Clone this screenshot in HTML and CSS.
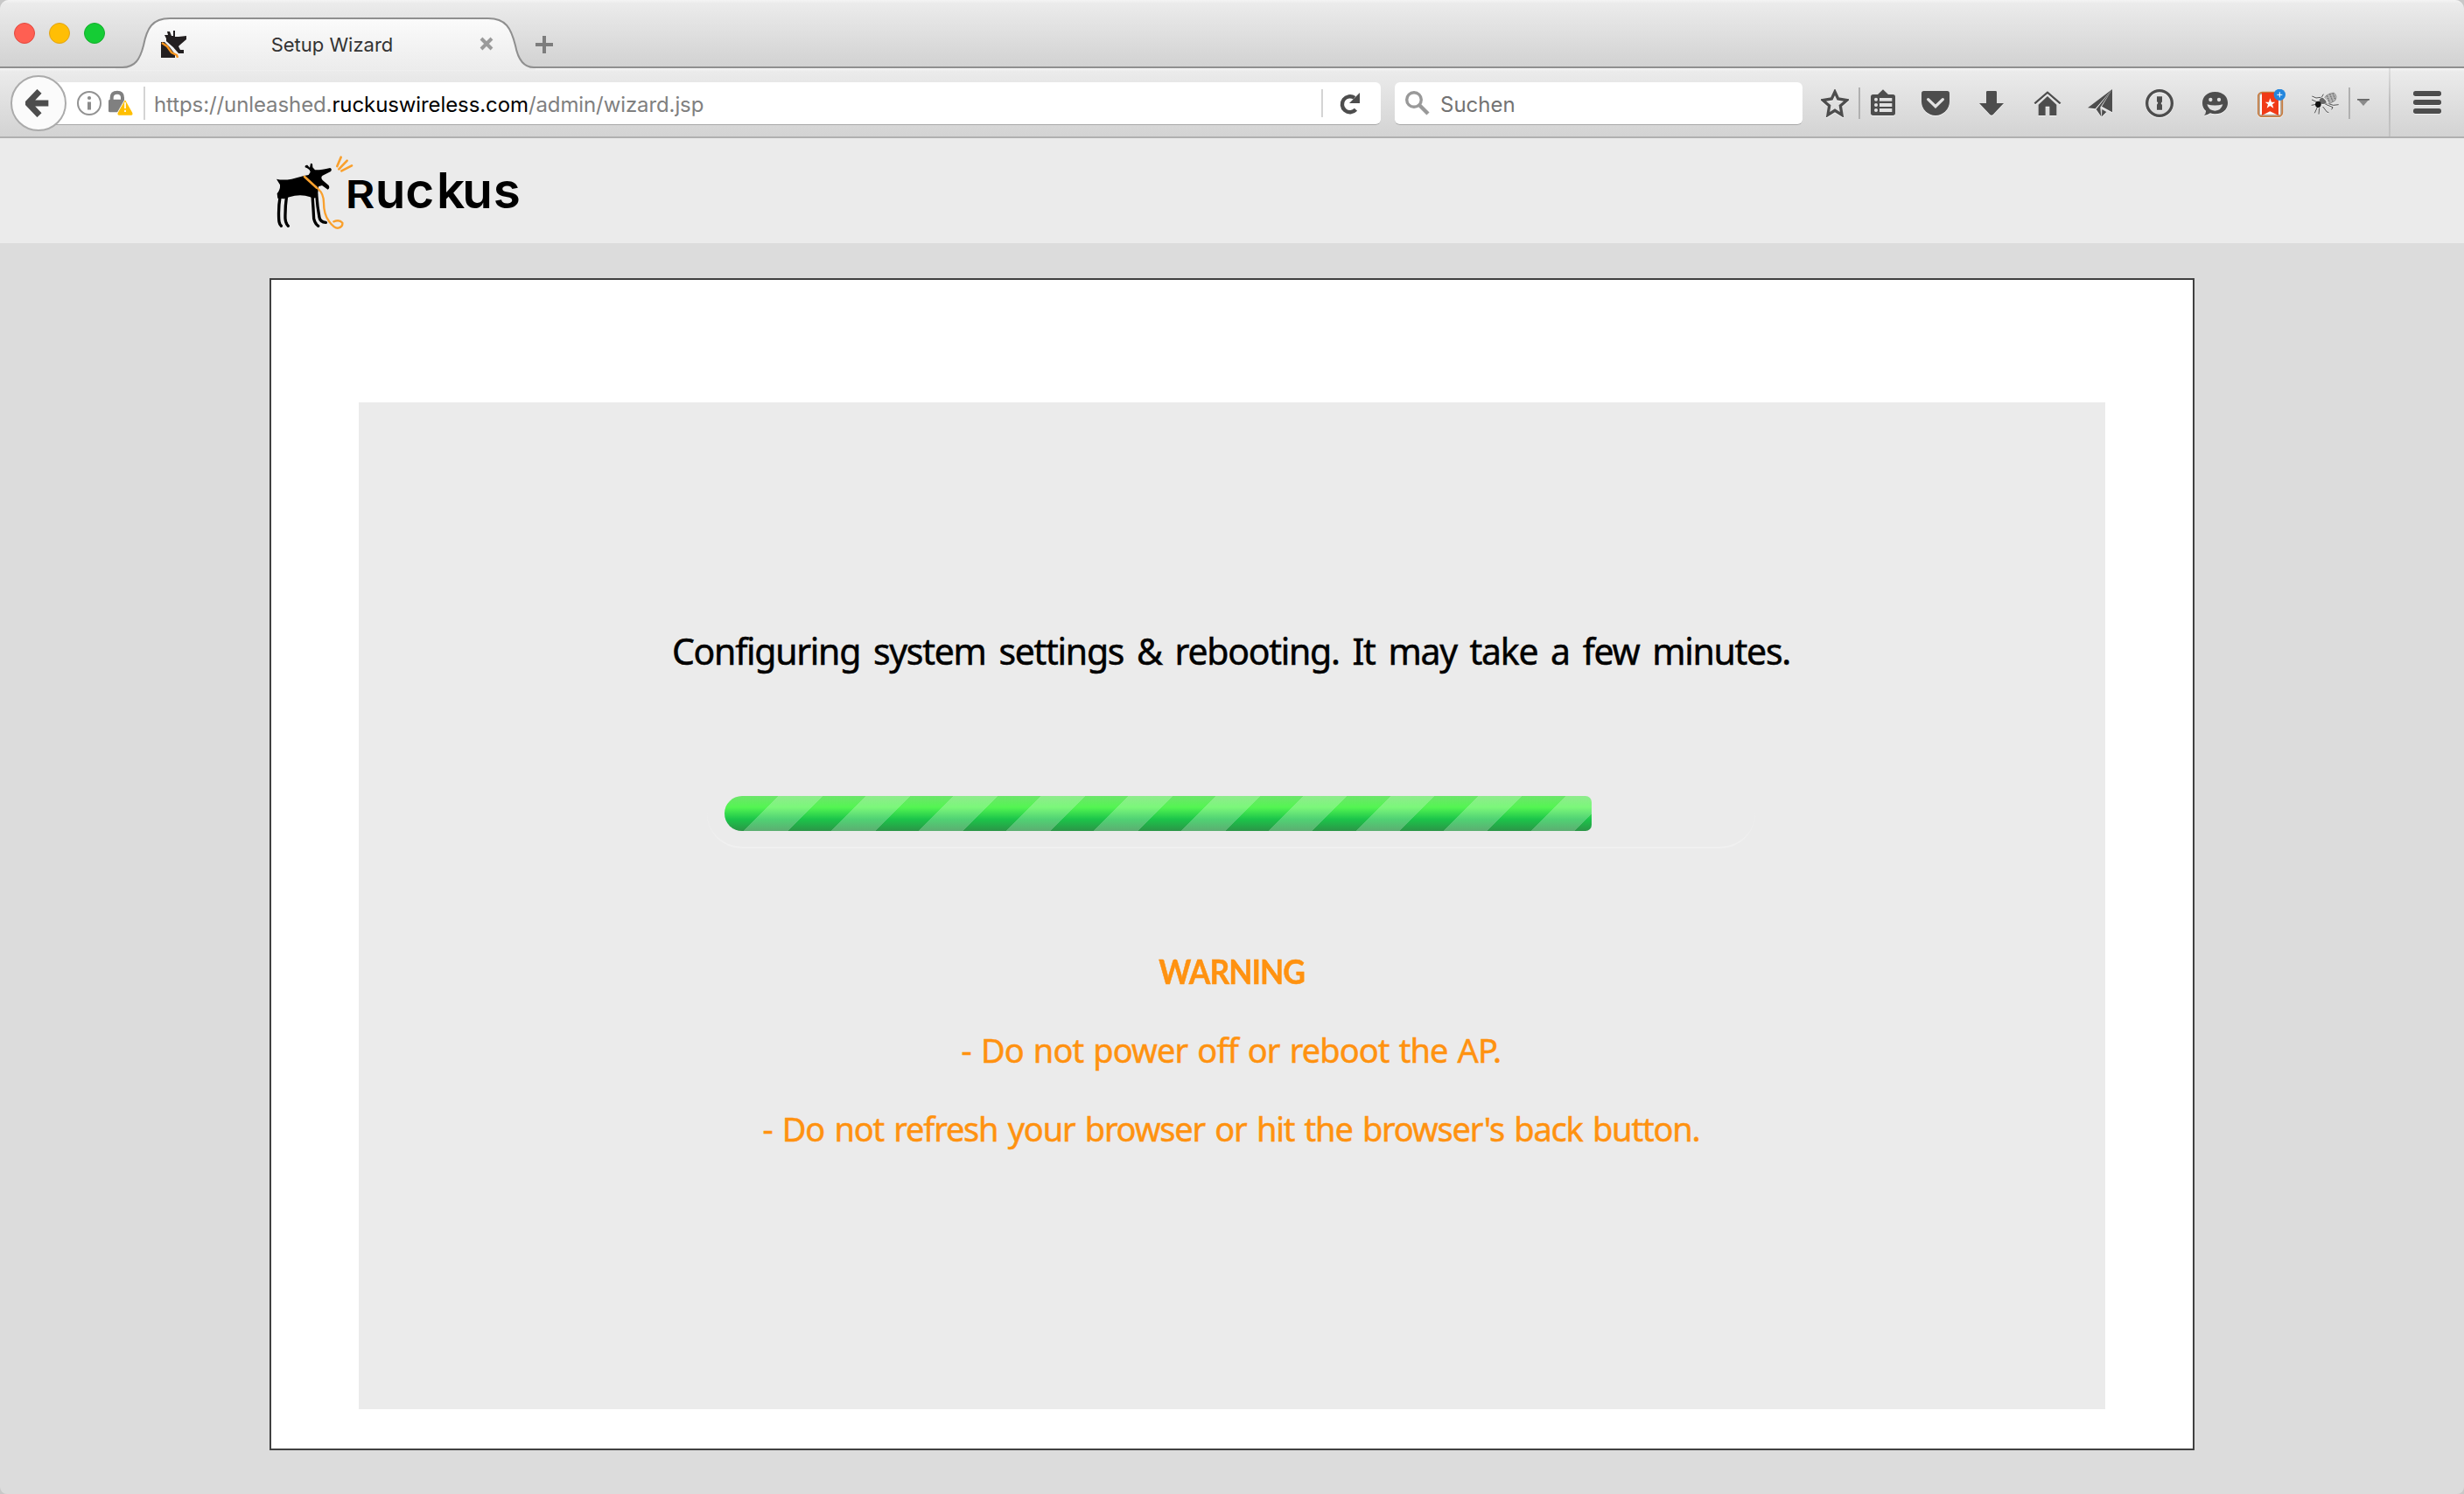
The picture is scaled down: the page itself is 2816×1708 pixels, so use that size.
FILE: index.html
```html
<!DOCTYPE html>
<html lang="de">
<head>
<meta charset="utf-8">
<title>Setup Wizard</title>
<link rel="stylesheet" href="styles.css">
</head>
<body>
<div class="window">
  <header class="tabstrip">
    <div class="lights"><i class="light red"></i><i class="light yellow"></i><i class="light green"></i></div>
    <div class="tab">
      <svg class="tab-shape" viewBox="0 0 480 60" width="480" height="60">
        <defs><linearGradient id="tabFill" x1="0" y1="0" x2="0" y2="1"><stop offset="0" stop-color="#fbfbfb"/><stop offset="1" stop-color="#ececec"/></linearGradient></defs>
        <path d="M0 57 H8 C22 57 28 48 32 32 C36 12 42 1 62 1 H426 C446 1 452 12 457 32 C460 48 466 57 478 57 H480 V60 H0Z" fill="url(#tabFill)"/>
        <path d="M0 57 H8 C22 57 28 48 32 32 C36 12 42 1 62 1 H426 C446 1 452 12 457 32 C460 48 466 57 478 57 H480" fill="none" stroke="#8f8f8f" stroke-width="2"/>
      </svg>
      <svg class="favicon" viewBox="0 0 32 32" width="32" height="32">
        <path d="M2 14H6L12 20L18 28V32H2Z M8 10L6 6H10L9 2H12L14 7H16V1H18V8H22L31 7V11L24 17L22 19L24 23H28V27H22L16 20L8 13Z" fill="#231f20"/>
        <path d="M3 15L9 19L14 26L20 29L21 32" fill="none" stroke="#f7941d" stroke-width="2.4"/>
      </svg>
      <span class="tab-title">Setup Wizard</span>
      <svg class="tab-close" viewBox="0 0 16 16" width="16" height="16"><path d="M2 2L14 14M14 2L2 14" stroke="#9a9a9a" stroke-width="4"/></svg>
    </div>
    <svg class="new-tab" viewBox="0 0 20 20" width="20" height="20"><path d="M10 0V20M0 10H20" stroke="#7d7d7d" stroke-width="4"/></svg>
  </header>

  <nav class="toolbar">
    <div class="back"><svg viewBox="86 126 84 96" width="28" height="32"><path d="M165 174H100M134 133L95 174L134 215" fill="none" stroke="#4d4d4d" stroke-width="21"/></svg></div>
    <div class="urlbar">
      <svg class="info" viewBox="0 0 28 28" width="28" height="28"><circle cx="14" cy="14" r="13" fill="none" stroke="#929292" stroke-width="2"/><circle cx="14" cy="8" r="2.1" fill="#8a8a8a"/><path d="M14 12.4V21.5" stroke="#8a8a8a" stroke-width="4"/></svg>
      <svg class="lock" viewBox="372 130 84 90" width="28" height="30">
        <path d="M383 170V156Q383 138 402 138Q420 138 420 156V170" fill="none" stroke="#808080" stroke-width="12"/>
        <rect x="372" y="162" width="52" height="44" rx="5" fill="#808080"/>
        <path d="M429 164L454 208Q456 216 450 216H408Q402 216 404 208Z" fill="#ffbf00" stroke="#fff" stroke-width="5" paint-order="stroke"/>
        <path d="M429 172V193M429 198V205" stroke="#fff" stroke-width="5"/>
      </svg>
      <i class="divider"></i>
      <span class="url">https://unleashed.<b>ruckuswireless.com</b>/admin/wizard.jsp</span>
      <i class="divider"></i>
      <svg class="reload" viewBox="0 0 24 26" width="24" height="26"><path d="M18.5 20.3A9 9 0 1 1 17 6.8" fill="none" stroke="#4d4d4d" stroke-width="4.4"/><path d="M23 1V13H11Z" fill="#4d4d4d"/></svg>
    </div>
    <div class="search">
      <svg viewBox="0 0 28 28" width="28" height="28"><circle cx="10" cy="10" r="8.3" fill="none" stroke="#999" stroke-width="3.4"/><path d="M16 16L26 26" stroke="#999" stroke-width="4.4"/></svg>
      <span>Suchen</span>
    </div>
    <div class="actions">
      <svg class="icon i-star" viewBox="93 96 96 96"><path d="M141 105L152 129L182 134L160 153L165 184L141 169L117 184L122 153L100 134L130 129Z" fill="none" stroke="#4d4d4d" stroke-width="10"/></svg>
      <i class="sep"></i>
      <svg class="icon i-list" viewBox="258 96 96 96"><path d="M306 97L324 114H340Q348 114 348 122V178Q348 186 340 186H272Q264 186 264 178V122Q264 114 272 114H288Z" fill="#4d4d4d"/><g fill="#e2e2e2"><circle cx="282" cy="131" r="6"/><circle cx="282" cy="150" r="6"/><circle cx="282" cy="168" r="6"/><rect x="294" y="126" width="43" height="11"/><rect x="294" y="144" width="43" height="12"/><rect x="294" y="162" width="43" height="12"/></g></svg>
      <svg class="icon i-pocket" viewBox="438 96 96 96"><path d="M446 102H526Q534 102 534 110V138A48 48 0 0 1 438 138V110Q438 102 446 102Z" fill="#4d4d4d"/><path d="M461 131L486 155L511 131" fill="none" stroke="#e2e2e2" stroke-width="10" stroke-linecap="round"/></svg>
      <svg class="icon i-down" viewBox="630 96 96 96"><path d="M664 102H692Q696 102 696 106V144H720L684 182Q678 188 672 182L636 144H660V106Q660 102 664 102Z" fill="#4d4d4d"/></svg>
      <svg class="icon i-home" viewBox="822 96 96 96"><path d="M870 120L901 149V186H877V155H863V186H839V149Z" fill="#4d4d4d"/><path d="M826 145L870 107L914 145" fill="none" stroke="#4d4d4d" stroke-width="7"/></svg>
      <svg class="icon i-plane" viewBox="1008 96 96 96"><path d="M1092 96L1008 160L1034 163Z M1092 96L1037 165L1054 190L1051 158Z M1092 96L1056 155L1092 175Z M1057 165L1072 174L1056 190Z" fill="#4d4d4d"/></svg>
      <svg class="icon i-key" viewBox="96 96 96 96"><circle cx="144" cy="144" r="43" fill="none" stroke="#4d4d4d" stroke-width="10"/><path d="M135 121H153V139L149 145L153 150V167H135V149L139 143L135 138Z" fill="#4d4d4d"/></svg>
      <svg class="icon i-smile" viewBox="288 96 96 96"><path d="M334 105C362 105 378 122 378 143C378 165 360 181 334 181C328 181 323 180 318 178Q309 185 297 186Q304 178 303 170C295 163 291 154 291 143C291 122 308 105 334 105Z" fill="#4d4d4d"/><circle cx="319" cy="132" r="6.5" fill="#e0e0e0"/><circle cx="348" cy="132" r="6.5" fill="#e0e0e0"/><path d="M307 148Q334 155 361 148Q355 170 334 170Q313 170 307 148Z" fill="#e0e0e0"/></svg>
      <svg class="icon i-wunder" viewBox="480 96 96 96"><rect x="482" y="107" width="83" height="83" rx="14" fill="#b9aca0" stroke="#c87a3c" stroke-width="5"/><path d="M489 118Q489 114 494 114H558V182H489Z" fill="#fff"/><path d="M495 108H552V186L523 172L495 186Z" fill="#f03a17"/><path d="M523 127L528 140L541 140L531 148L535 161L523 153L512 161L516 148L506 140L519 140Z" fill="#fff"/><circle cx="556" cy="115" r="20" fill="#2486dd"/><path d="M556 106V124M547 115H565" stroke="#fff" stroke-width="3"/></svg>
      <svg class="icon i-fly" viewBox="663 96 96 96">
        <path d="M697 124L681 126L667 120M684 140L666 132M682 148L665 151M686 156L676 178M692 160L690 182M704 156L718 174L724 176M714 148L738 158L734 166M724 146L740 151L758 149M700 124L706 113" fill="none" stroke="#333" stroke-width="2.5"/>
        <path d="M706 132Q712 112 742 108Q756 120 746 136Q730 148 712 148Z" fill="#b4b4b4" stroke="#777" stroke-width="2"/>
        <path d="M718 118L728 142M728 112L738 138M738 110L746 130" stroke="#555" stroke-width="3" stroke-dasharray="5 3"/>
        <ellipse cx="704" cy="136" rx="12" ry="11" fill="#686868"/><path d="M704 122L716 134L722 146" fill="none" stroke="#eee" stroke-width="4"/><ellipse cx="688" cy="148" rx="10" ry="11" fill="#111"/>
      </svg>
      <i class="sep sep-fly"></i>
      <svg class="caret" viewBox="0 0 14 8" width="14" height="8"><path d="M0 0H14L7 8Z" fill="#8a8a8a"/><path d="M0 .8H14" stroke="#666" stroke-width="1.6"/></svg>
      <i class="sep-full"></i>
      <svg class="icon i-menu" viewBox="1014 96 96 96"><g fill="#4d4d4d"><rect x="1014" y="102" width="96" height="18" rx="8"/><rect x="1014" y="132" width="96" height="18" rx="8"/><rect x="1014" y="162" width="96" height="18" rx="8"/></g></svg>
    </div>
  </nav>

  <div class="brandbar">
    <svg class="logo" viewBox="60 75 900 270" width="300" height="90" role="img" aria-label="Ruckus">
      <path d="M78 164Q100 169 130 164L172 153L188 150L194 140Q192 129 176 124Q174 115 184 116L192 125L195 110L201 112L202 124L210 133Q230 134 262 126Q270 130 264 138L236 152Q228 158 236 168L257 186Q262 196 254 200L234 186L222 190L219 222Q208 236 194 226Q160 214 122 226L104 232L82 230L80 214Q92 200 90 184Z"/>
      <g fill="none" stroke="#000" stroke-linecap="round" stroke-linejoin="round"><path d="M91 220Q84 260 86 300Q86 318 94 325M113 220Q107 262 108 300Q109 316 118 325" stroke-width="10"/><path d="M201 220Q204 260 206 300Q210 318 221 325M215 215Q218 260 225 296Q228 312 247 313" stroke-width="10"/></g>
      <g fill="none" stroke="#f9a02d" stroke-linecap="round"><path d="M174 156L216 194" stroke-width="8"/><path d="M221 198Q240 215 240 245Q240 285 258 309Q276 334 290 332Q306 328 304 314Q294 302 274 310" stroke-width="7"/><path d="M286 120L299 89M292 130L320 101M301 136L336 118" stroke-width="8"/></g>
      <text class="wordmark" y="265"><tspan class="wordmark-r" x="314" textLength="101" lengthAdjust="spacingAndGlyphs">R</tspan><tspan x="416 520 627 715 821">uckus</tspan></text>
    </svg>
  </div>

  <main class="page">
    <section class="frame">
      <div class="panel">
        <p class="status">Configuring system settings &amp; rebooting. It may take a few minutes.</p>
        <div class="track"><div class="bar"></div></div>
        <div class="warning">
          <strong>WARNING</strong>
          <p class="power">- Do not power off or reboot the AP.</p>
          <p class="refresh">- Do not refresh your browser or hit the browser's back button.</p>
        </div>
      </div>
    </section>
  </main>
</div>
</body>
</html>
```
FILE: styles.css
```css
* { box-sizing: border-box; }
body { margin: 0; background: #c8c8c8; font-family: Inter, "Liberation Sans", sans-serif; }
svg { display: block; flex: none; }
p { margin: 0; }
.window { width: 2816px; height: 1708px; display: flex; flex-direction: column; background: #dcdcdc; border-radius: 10px 10px 8px 8px; overflow: hidden; }

.tabstrip { height: 78px; display: flex; align-items: flex-start; background: linear-gradient(#f4f4f4 0, #ebebeb 4px, #d2d2d2 76px, #8f8f8f 76px); }
.lights { display: flex; gap: 16px; padding: 26px 0 0 16px; width: 132px; flex: none; }
.light { width: 24px; height: 24px; border-radius: 50%; flex: none; }
.red { background: #ff5f52; border: 1px solid #e2483e; }
.yellow { background: #ffbe05; border: 1px solid #e0a41a; }
.green { background: #15cc35; border: 1px solid #14ae2c; }
.tab { position: relative; width: 480px; height: 60px; margin-top: 20px; display: flex; flex: none; padding-left: 50px; }
.tab-shape { position: absolute; left: 0; top: 0; }
.favicon, .tab-title, .tab-close { position: relative; }
.favicon { margin-top: 14px; }
.tab-title { width: 330px; padding: 16px 0 0 1px; font-size: 22px; line-height: 30px; color: #333; text-align: center; }
.tab-close { margin: 22px 0 0 4px; }
.new-tab { margin: 41px 0 0 0; }

.toolbar { height: 80px; display: flex; align-items: flex-start; padding: 16px 0 0 12px; background: linear-gradient(#f5f5f5 0, #ebebeb 4px, #d3d3d3 78px, #b0b0b0 78px); }
.back { width: 64px; height: 64px; margin-top: -8px; border: 2px solid #ababab; border-radius: 50%; background: #fbfbfb; display: flex; align-items: center; padding-left: 15px; position: relative; z-index: 1; flex: none; }
.urlbar { width: 1514px; height: 49px; margin-left: -12px; display: flex; align-items: center; flex: none; background: #fff; border-bottom: 1px solid #a8a8a8; border-radius: 0 6px 6px 0; padding-left: 24px; }
.lock { margin-left: 8px; }
.divider { width: 2px; height: 38px; background: #d4d4d4; margin-left: 12px; }
.divider ~ .divider { height: 32px; margin-left: 0; }
.url { width: 1344px; padding: 3px 0 0 10px; font-size: 24px; line-height: 40px; color: #808080; white-space: nowrap; letter-spacing: -0.1px; }
.url b { font-weight: 400; color: #000; }
.reload { margin-left: 19px; }
.search { width: 466px; height: 49px; margin-left: 16px; flex: none; display: flex; align-items: center; background: #fff; border-bottom: 1px solid #a8a8a8; border-radius: 6px; padding-left: 12px; font-size: 24px; color: #737373; }
.search span { padding: 2px 0 0 12px; }
.actions { display: flex; align-items: flex-start; padding-top: 8px; }
.icon { width: 32px; height: 32px; filter: drop-shadow(0 1px 0 #f4f4f4); }
.i-star { margin-left: 21px; }
.sep { width: 2px; height: 36px; margin: -2px 0 0 11px; background: #b0b0b0; }
.i-list { margin-left: 10px; }
.i-pocket { margin-left: 28px; }
.i-down, .i-home { margin-left: 32px; }
.i-plane { margin-left: 30px; }
.i-key { margin-left: 34px; }
.i-smile, .i-wunder { margin-left: 32px; }
.i-fly { margin-left: 29px; }
.caret { margin: 11px 0 0 8px; }
.sep-full { width: 2px; height: 78px; margin: -24px 0 0 22px; background: linear-gradient(#dedede, #bdbdbd 50%, #c4c4c4); }
.i-menu { margin-left: 26px; }

.brandbar { height: 120px; background: #ebebeb; padding: 17px 0 0 310px; }
.wordmark { font-family: Inter, sans-serif; font-weight: 600; font-size: 170px; }
.wordmark-r { font-size: 131px; }

.page { flex: 1; padding: 40px 308px 0; }
.frame { height: 1340px; border: 2px solid #404040; background: #fff; padding: 140px 100px 0; }
.panel { height: 1151px; background: #ebebeb; display: flex; flex-direction: column; align-items: center; font-family: "Noto Sans", sans-serif; }
.status { padding-top: 254px; margin-right: 2px; font-size: 41px; line-height: 60px; color: #000; white-space: nowrap; letter-spacing: -1.3px; word-spacing: 5.5px; -webkit-text-stroke: 0.5px; }
.track { width: 1198px; height: 80px; margin-top: 116px; margin-right: 2px; padding: 20px; border-radius: 40px; border-bottom: 2px solid #f0f0f0; }
.bar { width: 991px; height: 40px; border-radius: 20px 7px 7px 20px; background: repeating-linear-gradient(135deg, rgba(255,255,255,.23) 0 8.49px, transparent 8.49px 43.84px, rgba(255,255,255,.23) 43.84px 70.71px), linear-gradient(#6de56b 0, #54f552 32%, #1cc54a 66%, #2b9547 100%); }
.warning { margin-top: 110px; display: flex; flex-direction: column; align-items: center; gap: 30px; font-size: 38px; line-height: 60px; color: #ff9210; white-space: nowrap; }
.warning strong { font-family: Lato, sans-serif; letter-spacing: -1px; transform: scaleX(0.93); -webkit-text-stroke: 0.5px; }
.power, .refresh { margin-right: 2px; -webkit-text-stroke: 0.5px; }
.power { letter-spacing: -0.9px; word-spacing: 2px; }
.refresh { letter-spacing: -1.2px; word-spacing: 2.6px; }
```
